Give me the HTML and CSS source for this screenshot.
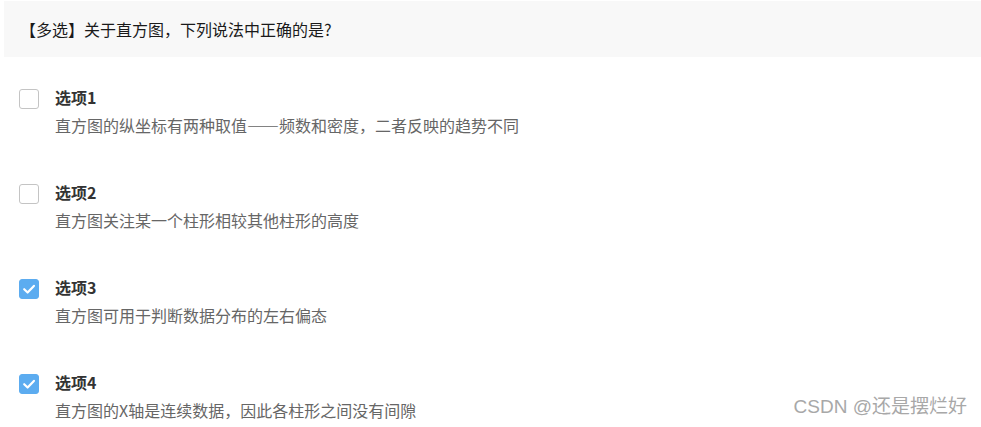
FILE: index.html
```html
<!DOCTYPE html>
<html lang="zh-CN">
<head>
<meta charset="utf-8">
<title>多选题</title>
<link rel="stylesheet" href="styles.css">
</head>
<body>
<div class="page">
  <div class="question">【多选】关于直方图，下列说法中正确的是?</div>
  <div class="options">
    <div class="option">
      <span class="box"></span>
      <div class="text">
        <div class="label">选项1</div>
        <div class="desc">直方图的纵坐标有两种取值——频数和密度，二者反映的趋势不同</div>
      </div>
    </div>
    <div class="option">
      <span class="box"></span>
      <div class="text">
        <div class="label">选项2</div>
        <div class="desc">直方图关注某一个柱形相较其他柱形的高度</div>
      </div>
    </div>
    <div class="option">
      <span class="box checked"><svg viewBox="0 0 20 20" width="20" height="20"><path d="M5.2 10.2 L8.6 13.5 L14.9 6.9" fill="none" stroke="#fff" stroke-width="2.2" stroke-linecap="round" stroke-linejoin="round"/></svg></span>
      <div class="text">
        <div class="label">选项3</div>
        <div class="desc">直方图可用于判断数据分布的左右偏态</div>
      </div>
    </div>
    <div class="option">
      <span class="box checked"><svg viewBox="0 0 20 20" width="20" height="20"><path d="M5.2 10.2 L8.6 13.5 L14.9 6.9" fill="none" stroke="#fff" stroke-width="2.2" stroke-linecap="round" stroke-linejoin="round"/></svg></span>
      <div class="text">
        <div class="label">选项4</div>
        <div class="desc">直方图的X轴是连续数据，因此各柱形之间没有间隙</div>
      </div>
    </div>
  </div>
  <div class="watermark">CSDN @还是摆烂好</div>
</div>
</body>
</html>
```
FILE: styles.css
```css
html, body {
  margin: 0;
  padding: 0;
  background: #fff;
}
.page {
  position: relative;
  width: 981px;
  height: 427px;
  overflow: hidden;
  font-family: "Microsoft YaHei", "Noto Sans CJK SC", "Liberation Sans", sans-serif;
}
.question {
  margin: 1px 0 0 4px;
  height: 56px;
  background: #f8f8f8;
  padding-left: 16px;
  display: flex;
  align-items: center;
  font-size: 16px;
  color: #1a1a1a;
}
.options {
  margin-top: 29px;
  padding-left: 19px;
}
.option {
  display: flex;
  gap: 16px;
  height: 95px;
}
.box {
  flex: none;
  box-sizing: border-box;
  width: 20px;
  height: 20px;
  margin-top: 3px;
  border: 1px solid #c4c4c4;
  border-radius: 3px;
  background: #fff;
  display: flex;
  align-items: center;
  justify-content: center;
}
.box.checked {
  background: #5cacf0;
  border-color: #5cacf0;
}
.box svg {
  display: block;
  flex: none;
}
.label {
  font-size: 16px;
  line-height: 22px;
  font-weight: bold;
  color: #333;
}
.desc {
  margin-top: 5px;
  font-size: 16px;
  line-height: 24px;
  color: #666;
}
.watermark {
  position: absolute;
  right: 14px;
  bottom: 8px;
  font-size: 19px;
  line-height: 24px;
  color: #a8a8a8;
  font-family: "Liberation Sans", "Noto Sans CJK SC", sans-serif;
}
```
